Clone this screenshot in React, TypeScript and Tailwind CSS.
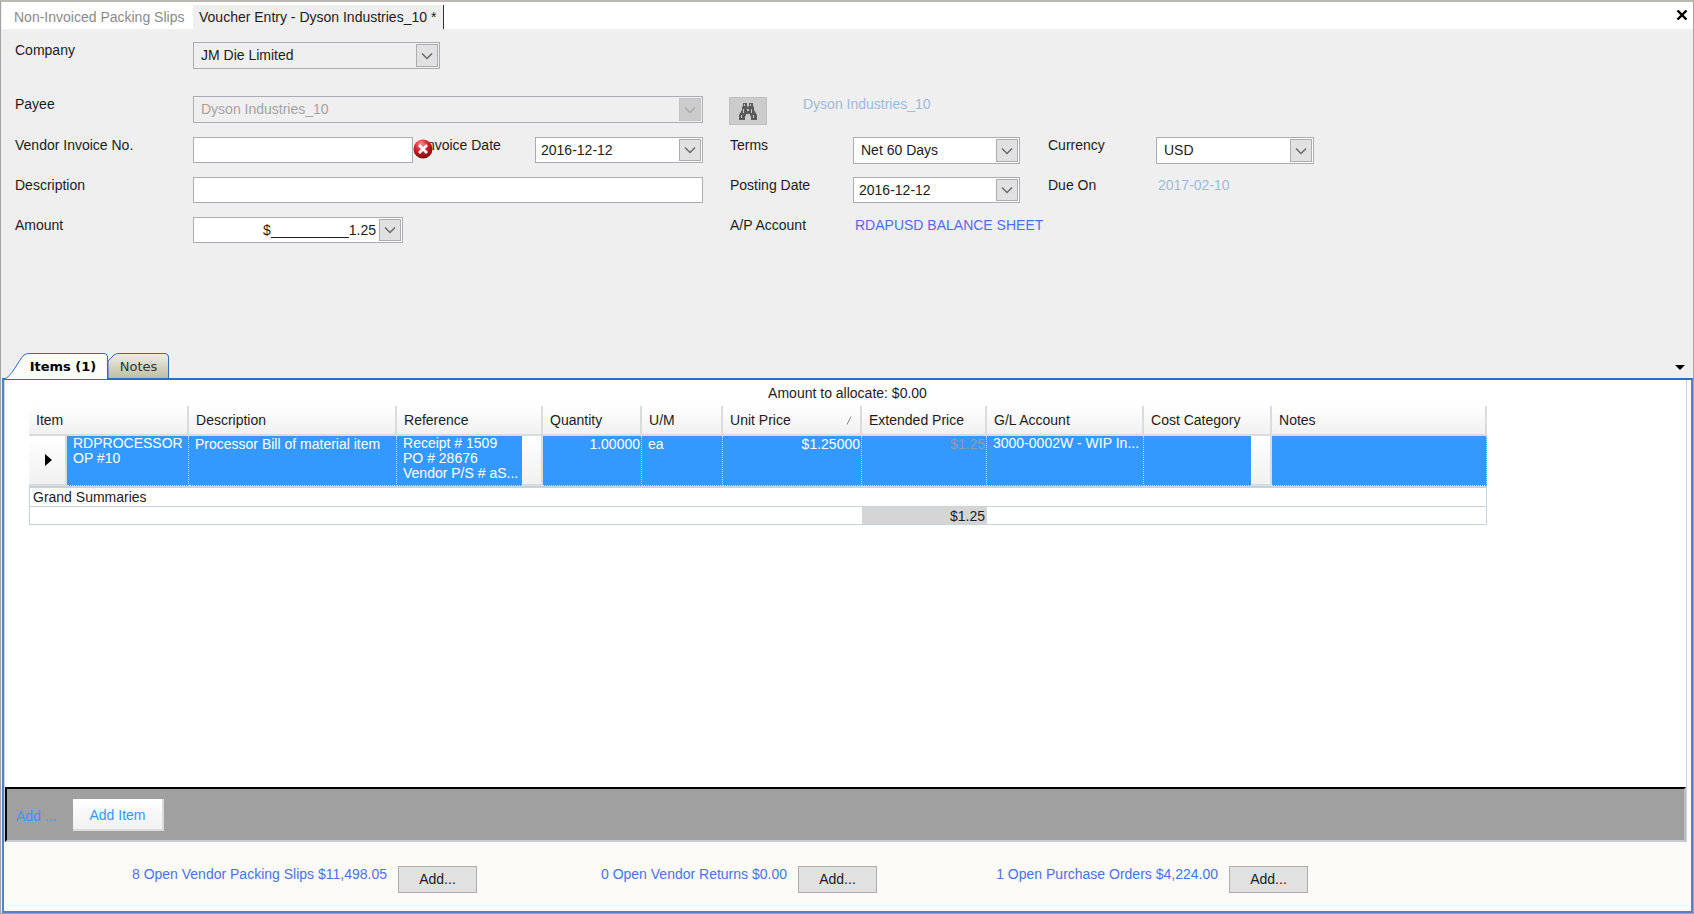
import { useState } from "react";
import type { ReactNode } from "react";

const Chevron = ({ dim }: { dim?: boolean }) => (
    <svg width="12" height="8" viewBox="0 0 12 8" fill="none" stroke={dim ? "#a8a8a8" : "#6a6a6a"} strokeWidth="1.5">
        <path d="M1 1.5 L6 6.5 L11 1.5" />
    </svg>
);

const Binoculars = () => (
    <svg width="20" height="17" viewBox="0 0 20 17">
        <path d="M5 0h4v3l1 1 1-1V0h4v3l1 1v3l3 5v5h-6v-4h-1v-2h-4v2H7v4H1v-5l3-5V4l1-1z" fill="#5a5a5a" />
        <path d="M6 1h1v2H6zM12 1h1v2h-1zM5 6h1v4H5zM13 6h1v4h-1zM3 12h1v3H3zM15 12h1v3h-1zM9 6h2v2H9z" fill="#c6c6c6" />
    </svg>
);

const ErrorIcon = () => (
    <svg width="20" height="20" viewBox="0 0 20 20">
        <defs>
            <radialGradient id="err" cx="0.4" cy="0.25" r="0.75">
                <stop offset="0" stopColor="#f39a94" />
                <stop offset="0.45" stopColor="#d8232a" />
                <stop offset="1" stopColor="#7d0a0e" />
            </radialGradient>
        </defs>
        <circle cx="10" cy="10" r="9.5" fill="url(#err)" />
        <path d="M6 6 L14 14 M14 6 L6 14" stroke="#fff" strokeWidth="2.8" />
    </svg>
);

const Label = ({ htmlFor, children }: { htmlFor?: string; children: ReactNode }) => (
    <label htmlFor={htmlFor} className="h-4 leading-4 whitespace-nowrap">{children}</label>
);

interface ComboProps {
    id: string;
    value: string;
    disabled?: boolean;
    gray?: boolean;
}

const Combo = ({ id, value, disabled, gray }: ComboProps) => (
    <div className={`relative h-[27px] w-full border border-[#abadb3] ${gray ? "bg-[#efefef]" : "bg-white"}`}>
        <select id={id} disabled={disabled} className={`h-full w-full appearance-none bg-transparent pl-[7px] pr-7 opacity-100 outline-none ${disabled ? "text-[#a3a3a3]" : ""}`}>
            <option>{value}</option>
        </select>
        <span className={`pointer-events-none absolute inset-y-px right-px flex w-[22px] items-center justify-center border ${disabled ? "border-[#c4c4c4] bg-[#cccccc]" : "border-[#adadad] bg-[#e1e1e1]"}`}>
            <Chevron dim={disabled} />
        </span>
    </div>
);

const DropInput = ({ id, initial, right }: { id: string; initial: string; right?: boolean }) => {
    const [value, setValue] = useState(initial);

    return (
        <div className="flex h-[26px] w-full border border-[#abadb3] bg-white p-px">
            <input id={id} type="text" value={value} onChange={(e) => setValue(e.target.value)} className={`min-w-0 flex-1 outline-none ${right ? "pr-[3px] text-right" : "pl-1"}`} />
            <button type="button" aria-label="Open list" className="flex w-[22px] items-center justify-center border border-[#adadad] bg-[#e1e1e1]">
                <Chevron />
            </button>
        </div>
    );
};

const columns = [
    { name: "Item", span: 2 },
    { name: "Description" },
    { name: "Reference", span: 2 },
    { name: "Quantity" },
    { name: "U/M" },
    { name: "Unit Price", sorted: true },
    { name: "Extended Price" },
    { name: "G/L Account" },
    { name: "Cost Category", span: 2 },
    { name: "Notes" },
];

const cell = "border-r border-b border-dotted border-r-[#c5daf0] border-b-[#d5e6f8] bg-[#3399ff] align-top";
const raised = "border-r-2 border-b-2 border-[#d9dcdc] bg-linear-to-b from-white to-[#f1f1f1]";

const ItemsTable = () => (
    <table className="w-[1458px] table-fixed border-separate border-spacing-0">
        <colgroup>
            <col className="w-[38px]" />
            <col className="w-[122px]" />
            <col className="w-[208px]" />
            <col className="w-[125px]" />
            <col className="w-[21px]" />
            <col className="w-[99px]" />
            <col className="w-[81px]" />
            <col className="w-[139px]" />
            <col className="w-[125px]" />
            <col className="w-[157px]" />
            <col className="w-[107px]" />
            <col className="w-[21px]" />
            <col className="w-[215px]" />
        </colgroup>
        <thead>
            <tr>
                {columns.map((col) => (
                    <th key={col.name} colSpan={col.span} className={`h-[30px] pl-[7px] text-left font-normal ${raised}`}>
                        <span className="flex items-center justify-between whitespace-nowrap">
                            {col.name}
                            {col.sorted && (
                                <svg className="mr-2" width="6" height="9" viewBox="0 0 6 9" stroke="#8a8a8a">
                                    <path d="M1 8.5 L5 0.5" />
                                </svg>
                            )}
                        </span>
                    </th>
                ))}
            </tr>
        </thead>
        <tbody className="leading-[15px] text-white">
            <tr>
                <td className={`h-[50px] ${raised}`}>
                    <svg className="ml-4" width="7" height="12" viewBox="0 0 7 12">
                        <path d="M0 0 L7 6 L0 12 Z" fill="#000" />
                    </svg>
                </td>
                <td className={`${cell} pl-[6px]`}>RDPROCESSOR<br />OP #10</td>
                <td className={`${cell} truncate pt-px pl-[6px]`}>Processor Bill of material item</td>
                <td className={`${cell} truncate border-r-0 pl-[6px]`}>Receipt # 1509<br />PO # 28676<br />Vendor P/S # aS...</td>
                <td className={raised}></td>
                <td className={`${cell} pt-px pr-px text-right`}>1.00000</td>
                <td className={`${cell} pt-px pl-[6px]`}>ea</td>
                <td className={`${cell} pt-px pr-px text-right`}>$1.25000</td>
                <td className={`${cell} pt-px pr-px text-right text-[#9299a3]`}>$1.25</td>
                <td className={`${cell} truncate pl-[6px]`}>3000-0002W - WIP In...</td>
                <td className={`${cell} border-r-0`}></td>
                <td className={raised}></td>
                <td className={cell}></td>
            </tr>
        </tbody>
        <tfoot className="leading-4">
            <tr>
                <td colSpan={13} className="h-[21px] border border-t-2 border-[#c3d3e0] bg-white pl-[3px]">Grand Summaries</td>
            </tr>
            <tr>
                <td colSpan={8} className="h-[18px] border-b border-l border-[#c3d3e0] bg-white"></td>
                <td className="border-b border-[#c3d3e0] bg-[#d5d5d5] pr-[2px] text-right">$1.25</td>
                <td colSpan={4} className="border-r border-b border-[#c3d3e0] bg-white"></td>
            </tr>
        </tfoot>
    </table>
);

const OpenLink = ({ text }: { text: string }) => (
    <div className="flex items-start justify-end gap-[11px]">
        <a href="#" className="leading-4 whitespace-nowrap text-[#4a72e8]">{text}</a>
        <button type="button" className="h-[27px] w-[79px] border border-[#adadad] bg-[#e1e1e1]">Add...</button>
    </div>
);

const VoucherForm = () => {
    const [invoiceNo, setInvoiceNo] = useState("");
    const [description, setDescription] = useState("");

    return (
        <form className="grid grid-cols-[178px_342px_168px_27px_123px_195px_108px_158px] grid-rows-[54px_41px_40px_40px_27px] items-start pt-[13px] pb-[108px] pl-[13px]">
            <Label htmlFor="company">Company</Label>
            <div className="col-span-7 w-[247px]"><Combo id="company" value="JM Die Limited" gray /></div>

            <Label htmlFor="payee">Payee</Label>
            <div className="col-span-2"><Combo id="payee" value="Dyson Industries_10" disabled gray /></div>
            <div className="col-span-5 flex items-start gap-9 pl-[26px]">
                <button type="button" aria-label="Find payee" className="mt-px flex h-7 w-[38px] items-center justify-center border border-[#bfbfbf] bg-[#cccccc]">
                    <Binoculars />
                </button>
                <a href="#" className="leading-4 text-[#9dbbdc]">Dyson Industries_10</a>
            </div>

            <Label htmlFor="invoice-no">Vendor Invoice No.</Label>
            <div className="flex">
                <input id="invoice-no" type="text" value={invoiceNo} onChange={(e) => setInvoiceNo(e.target.value)} className="h-[26px] w-[220px] border border-[#abadb3] bg-white px-1 outline-none" />
                <div className="relative flex pl-[10px]">
                    <Label htmlFor="invoice-date">Invoice Date</Label>
                    <span className="absolute top-[2px] left-0"><ErrorIcon /></span>
                </div>
            </div>
            <DropInput id="invoice-date" initial="2016-12-12" />
            <div />
            <Label htmlFor="terms">Terms</Label>
            <div className="w-[167px]"><Combo id="terms" value="Net 60 Days" /></div>
            <Label htmlFor="currency">Currency</Label>
            <Combo id="currency" value="USD" />

            <Label htmlFor="description">Description</Label>
            <input id="description" type="text" value={description} onChange={(e) => setDescription(e.target.value)} className="col-span-2 h-[26px] border border-[#abadb3] bg-white px-1 outline-none" />
            <div />
            <Label htmlFor="posting-date">Posting Date</Label>
            <div className="w-[167px]"><DropInput id="posting-date" initial="2016-12-12" /></div>
            <span className="leading-4">Due On</span>
            <span className="pl-[2px] leading-4 text-[#9dbbdc]">2017-02-10</span>

            <Label htmlFor="amount">Amount</Label>
            <div className="col-span-2 w-[210px]"><DropInput id="amount" initial="$__________1.25" right /></div>
            <div />
            <span className="leading-4">A/P Account</span>
            <a href="#" className="pl-[2px] leading-4 whitespace-nowrap text-[#4f6ef0]">RDAPUSD BALANCE SHEET</a>
        </form>
    );
};

const DetailTabs = () => (
    <div className="flex h-[26px] items-end pr-1 pl-[2px] font-['DejaVu_Sans','Noto_Sans',sans-serif] text-[13px]">
        <button type="button" className="relative z-10 -mb-px h-[27px] w-[104px] pt-[2px] pl-[14px] font-bold text-black">
            <svg className="absolute inset-0" width="104" height="27" viewBox="0 0 104 27">
                <path d="M0 27 C7 26 14 9 20 3 Q22 1.5 26 1.5 H100 Q103.5 1.5 103.5 5 V27" fill="#fcfcfa" stroke="#316ac5" />
            </svg>
            <span className="relative">Items (1)</span>
        </button>
        <button type="button" className="relative h-[25px] w-[61px] pt-[2px] text-[#333]">
            <svg className="absolute inset-0" width="61" height="25" viewBox="0 0 61 25">
                <defs>
                    <linearGradient id="tab" x1="0" y1="0" x2="0" y2="1">
                        <stop offset="0" stopColor="#eeeee8" />
                        <stop offset="1" stopColor="#bfbea3" />
                    </linearGradient>
                </defs>
                <path d="M0 25 V8 L6 2 Q8 0.5 11 0.5 H57 Q60.5 0.5 60.5 4 V25" fill="url(#tab)" stroke="#316ac5" />
            </svg>
            <span className="relative">Notes</span>
        </button>
        <button type="button" aria-label="Tab list" className="mb-1 ml-auto p-1">
            <svg width="10" height="5" viewBox="0 0 10 5"><path d="M0 0 H10 L5 5 Z" fill="#000" /></svg>
        </button>
    </div>
);

const App = () => {
    return (
        <div className="flex min-h-screen flex-col border border-t-2 border-[#a3a3a3] border-t-[#b9b9b0] bg-[#efefef] pl-px font-['Liberation_Sans',Arial,sans-serif] text-[14px] text-[#1c1c1c]">
            <div className="flex h-[27px] items-end bg-white">
                <button type="button" className="h-6 w-[191px] pl-3 text-left whitespace-nowrap text-[#8a8a8a]">Non-Invoiced Packing Slips</button>
                <button type="button" className="h-6 w-[251px] border-r border-[#333] bg-[#efefef] pl-[6px] text-left whitespace-nowrap">Voucher Entry - Dyson Industries_10 *</button>
                <button type="button" aria-label="Close" className="mr-[5px] mb-[9px] ml-auto">
                    <svg width="12" height="10" viewBox="0 0 12 10" stroke="#000" strokeWidth="2.4"><path d="M1.5 0.5 L10.5 9.5 M10.5 0.5 L1.5 9.5" /></svg>
                </button>
            </div>

            <VoucherForm />
            <DetailTabs />

            <div className="flex flex-1 flex-col border-2 border-[#4f83cc] border-t-[#316ac5] bg-[#fbfaf7]">
                <div className="mr-1 flex flex-1 flex-col border-r border-l border-[#c8d5e2] bg-white">
                    <div className="flex-1 pt-1 pl-[24px]">
                        <p className="mb-1 pr-5 text-center leading-[18px]">Amount to allocate: $0.00</p>
                        <ItemsTable />
                    </div>
                    <div className="flex h-[55px] items-center gap-[14px] border-2 border-t-black border-r-[#bdbdbd] border-b-[#c5cdd5] border-l-black bg-[#a0a0a0] pl-[9px]">
                        <span className="mt-1 w-[43px] text-[#3a98f5]">Add ...</span>
                        <button type="button" className={`h-8 w-[91px] pt-1 text-[#3399ff] ${raised}`}>Add Item</button>
                    </div>
                </div>
                <div className="grid h-[69px] grid-cols-[473px_400px_431px] pt-6">
                    <OpenLink text="8 Open Vendor Packing Slips $11,498.05" />
                    <OpenLink text="0 Open Vendor Returns $0.00" />
                    <OpenLink text="1 Open Purchase Orders $4,224.00" />
                </div>
            </div>
        </div>
    );
};

export default App;
